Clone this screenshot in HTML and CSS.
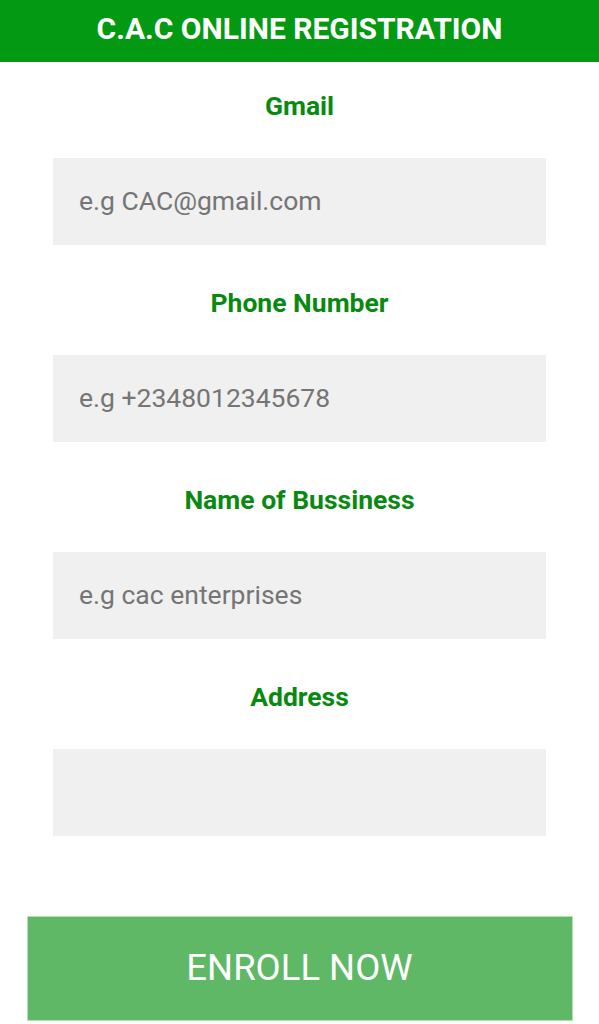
FILE: index.html
```html
<!DOCTYPE html>
<html>
<head>
<meta charset="utf-8">
<link rel="stylesheet" href="styles.css">
</head>
<body>
<header class="header">C.A.C ONLINE REGISTRATION</header>
<form class="form">
  <label class="label">Gmail</label>
  <div class="input"><span class="ph">e.g CAC@gmail.com</span></div>
  <label class="label">Phone Number</label>
  <div class="input"><span class="ph">e.g +2348012345678</span></div>
  <label class="label">Name of Bussiness</label>
  <div class="input"><span class="ph">e.g cac enterprises</span></div>
  <label class="label">Address</label>
  <div class="input"></div>
  <div class="button">ENROLL NOW</div>
</form>
</body>
</html>
```
FILE: styles.css
```css
* { box-sizing: border-box; }
html, body { margin: 0; padding: 0; background: #fff; }
body { font-family: Roboto, "Noto Sans", sans-serif; width: 599px; }
.header {
  height: 62px;
  background: #039912;
  color: #fff;
  font-weight: 700;
  font-size: 30px;
  display: flex;
  align-items: center;
  justify-content: center;
  padding-bottom: 6px;
}
.form { display: flex; flex-direction: column; align-items: center; }
.label {
  display: block;
  color: #088a10;
  font-weight: 700;
  font-size: 26.5px;
  line-height: 26px;
  margin-top: 45px;
  margin-bottom: 40px;
}
.label:first-child { margin-top: 31px; }
.input {
  width: 493px;
  height: 87px;
  background: #f0f0f0;
  display: flex;
  align-items: center;
  padding-left: 26px;
  padding-bottom: 2px;
}
.ph { color: #757575; font-size: 26.5px; }
.label + .input { margin-top: -1px; }
.button {
  margin-top: 80px;
  width: 546px;
  height: 105px;
  background: #5eb865;
  border: 1px solid #b6e0b8;
  color: #fff;
  font-size: 36.5px;
  display: flex;
  align-items: center;
  justify-content: center;
  padding-bottom: 2px;
}
```
